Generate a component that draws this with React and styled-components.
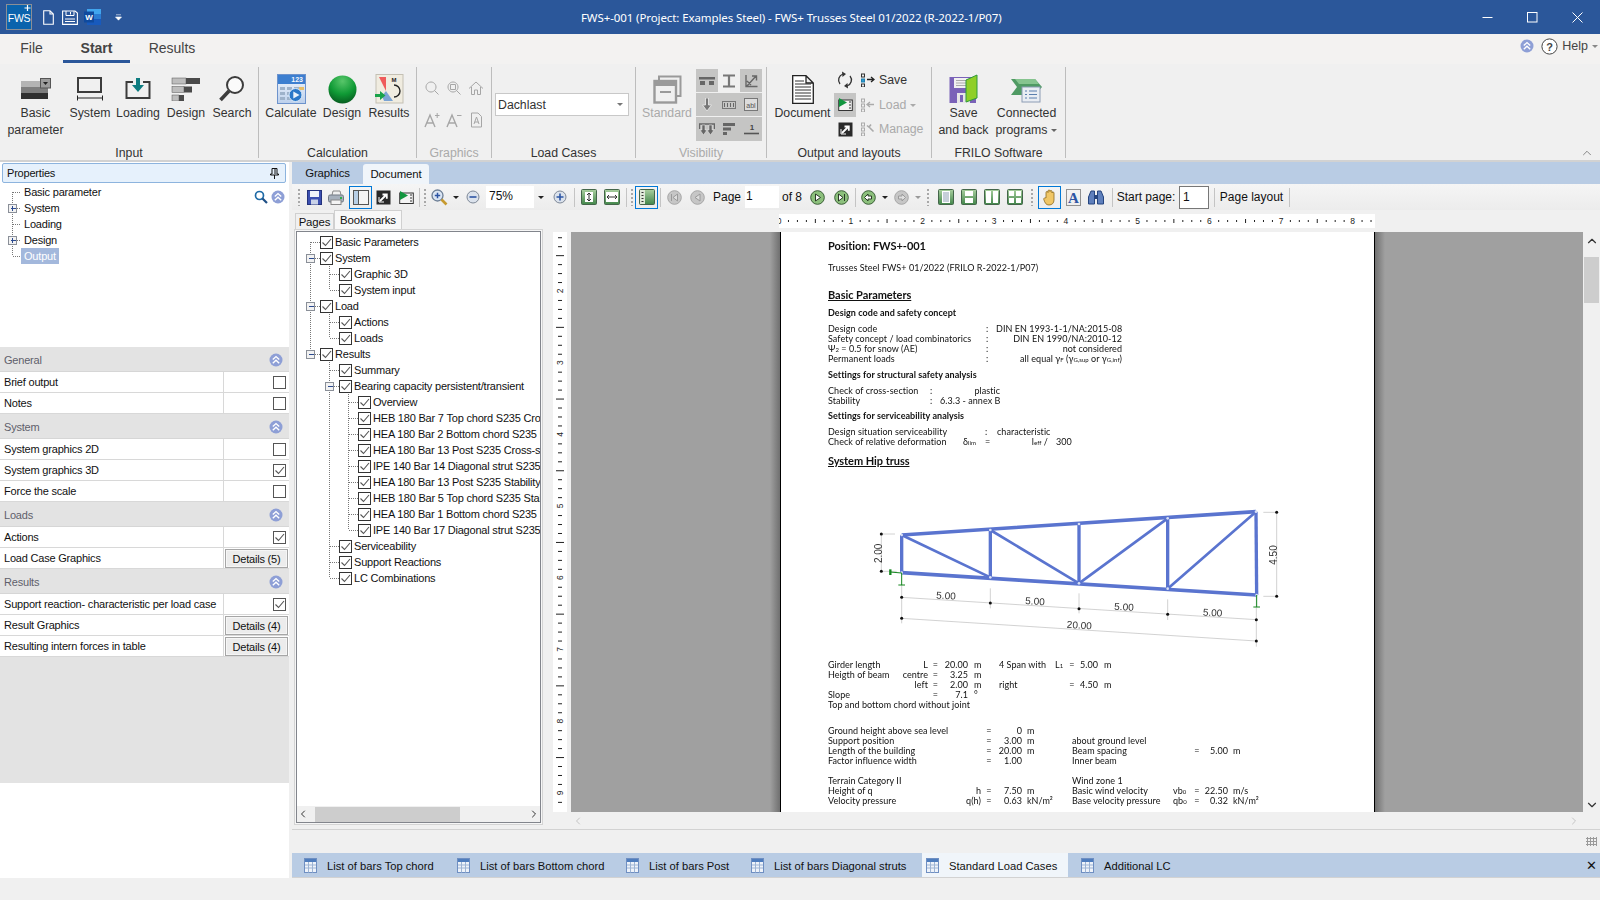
import React from 'react';
import styled, { createGlobalStyle } from 'styled-components';
import { ChevronLeft, ChevronRight, ChevronUp, ChevronDown } from 'lucide-react';

const UI_FONT = '"Liberation Sans", Arial, sans-serif';

const GlobalStyle = createGlobalStyle`
html, body {
    margin: 0;
    padding: 0;
    background: #f0f0f0;
}
* {
    box-sizing: border-box;
}
`

const Wrapper = styled.div`
width: 1600px;
height: 900px;
display: flex;
flex-direction: column;
overflow: hidden;
font-family: ${UI_FONT};
font-size: 11px;
letter-spacing: -0.2px;
color: #111;
background: #f0f0f0;
`

/* title bar */
const TitleBar = styled.div`
height: 34px;
flex: none;
display: grid;
grid-template-columns: 581px 1fr auto;
align-items: center;
background: #2b579a;
color: #fff;
`

const Quick = styled.div`
display: flex;
align-items: center;
padding-left: 6px;
`

const QuickItem = styled.span`
display: flex;
margin-left: ${p => p.$ml || 0}px;
`

const TitleText = styled.div`
font-family: "Noto Sans", sans-serif;
font-size: 11.5px;
letter-spacing: -0.1px;
white-space: nowrap;
`

const WinButtons = styled.div`
display: flex;
align-items: center;
`

const WinButton = styled.div`
width: 45px;
height: 34px;
display: flex;
align-items: center;
justify-content: center;
`

/* ribbon */
const RibbonTabs = styled.div`
height: 30px;
flex: none;
display: flex;
background: #f3f2f1;
font-size: 14px;
letter-spacing: 0;
color: #444;
`

const RibbonTab = styled.div`
width: ${p => p.$w}px;
height: 29px;
line-height: 28px;
text-align: center;
font-weight: ${p => p.$active ? 700 : 400};
border-bottom: 3px solid ${p => p.$active ? '#2b579a' : 'transparent'};
`

const HelpBox = styled.div`
margin-left: auto;
display: flex;
align-items: center;
height: 24px;
padding-right: 2px;
gap: 4px;
font-size: 12.5px;
color: #444;
`

const RibbonBody = styled.div`
height: 98px;
flex: none;
display: flex;
position: relative;
padding-top: 3px;
background: #f0f0f0;
border-bottom: 2px solid #d2d2d2;
font-size: 12.3px;
letter-spacing: 0;
color: #333;
`

const Group = styled.div`
width: ${p => p.$w}px;
height: 91px;
flex: none;
display: flex;
flex-direction: column;
border-right: 1px solid #bdbdbd;
`

const GroupBody = styled.div`
height: 79px;
flex: none;
display: flex;
padding-left: ${p => p.$pad || 0}px;
`

const GroupLabel = styled.div`
height: 15px;
flex: none;
line-height: 15px;
text-align: center;
color: ${p => p.$dim ? '#aaa' : '#333'};
`

const BigButton = styled.div`
width: ${p => p.$w}px;
flex: none;
display: flex;
flex-direction: column;
align-items: center;
padding-top: 6px;
text-align: center;
line-height: 16.5px;
white-space: nowrap;
color: ${p => p.$dim ? '#aaa' : 'inherit'};
`

const BigIcon = styled.div`
height: 32px;
display: flex;
align-items: center;
justify-content: center;
`

const SmallGrid = styled.div`
height: 79px;
flex: none;
display: grid;
grid-template-columns: repeat(3, 22px);
grid-auto-rows: 32px;
padding: 5px 0 0 4px;
place-items: center;
`

const RibbonSelect = styled.div`
width: 134px;
height: 23px;
margin: 26px 0 0 3px;
display: flex;
align-items: center;
justify-content: space-between;
padding: 0 5px 0 2px;
background: #fff;
border: 1px solid #c8c8c8;
`

const Caret = styled.span`
display: inline-block;
border-left: 3px solid transparent;
border-right: 3px solid transparent;
border-top: 3px solid ${p => p.$color || '#666'};
margin-left: ${p => p.$ml || 0}px;
vertical-align: middle;
`

const VisGrid = styled.div`
width: 66px;
height: 72px;
margin: 2px 0 0 0;
display: grid;
grid-template-columns: repeat(3, 22px);
grid-template-rows: repeat(3, 24px);
place-items: center;
background: #c5c5c4;
`

const VisCell = styled.div`
width: 100%;
height: 100%;
display: flex;
align-items: center;
justify-content: center;
background: ${p => p.$light ? '#f0f0f0' : 'transparent'};
border-bottom: ${p => p.$line ? '1px solid #f0f0f0' : '0'};
`

const OutColumn = styled.div`
width: 22px;
margin-top: 1px;
display: flex;
flex-direction: column;
`

const OutCell = styled.div`
height: 24.5px;
display: flex;
align-items: center;
justify-content: center;
background: ${p => p.$on ? '#c5c5c4' : 'transparent'};
`

const OutList = styled.div`
margin: 1px 0 0 5px;
display: flex;
flex-direction: column;
`

const OutRow = styled.div`
height: 24.5px;
display: flex;
align-items: center;
gap: 4px;
color: ${p => p.$dim ? '#aaa' : '#333'};
`

const Collapse = styled.div`
position: absolute;
right: 6px;
bottom: 0;
color: #666;
display: flex;
`

/* main area */
const Main = styled.div`
flex: 1;
min-height: 0;
display: flex;
`

const LeftPanel = styled.div`
width: 289px;
flex: none;
display: flex;
flex-direction: column;
background: #fff;
`

const PropsHead = styled.div`
height: 20px;
margin: 1px 3px 0 2px;
flex: none;
display: flex;
align-items: center;
justify-content: space-between;
padding: 0 6px 0 4px;
background: #e6f1fc;
border: 1px solid #8db4de;
border-radius: 2px;
`

const PropsTree = styled.div`
height: 164px;
flex: none;
position: relative;
padding-top: 1px;
`

const TreeTools = styled.div`
position: absolute;
right: 4px;
top: 7px;
display: flex;
align-items: center;
gap: 3px;
`

const TreeRow = styled.div`
height: 16px;
display: flex;
align-items: center;
white-space: nowrap;
`

const TreeText = styled.span`
height: 16px;
line-height: 17px;
padding: 0 3px 0 ${p => p.$pad ?? 1}px;
margin-left: ${p => p.$ml || 0}px;
background: ${p => p.$sel ? '#a3b8dc' : 'transparent'};
color: ${p => p.$sel ? '#fff' : '#111'};
`

const GroupHead = styled.div`
height: 25px;
flex: none;
display: flex;
align-items: center;
justify-content: space-between;
padding: 1px 6px 0 4px;
background: #e3e3e3;
color: #5f5f6b;
border-bottom: 1px solid #d6d6d6;
`

const PropRow = styled.div`
height: 21px;
flex: none;
display: grid;
grid-template-columns: 224px 1fr;
align-items: center;
background: #fff;
border-bottom: 1px solid #d8d8d8;
`

const PropLabel = styled.div`
height: 100%;
line-height: 20px;
padding-left: 4px;
border-right: 1px solid #d8d8d8;
white-space: nowrap;
`

const PropValue = styled.div`
display: flex;
justify-content: flex-end;
padding-right: 3px;
`

const CheckBox = styled.span`
width: 13px;
height: 13px;
flex: none;
display: inline-flex;
align-items: center;
justify-content: center;
background: #fff;
border: 1px solid ${p => p.$dark ? '#333' : '#555'};
`

const DetailsButton = styled.div`
width: 63px;
height: 19px;
line-height: 18px;
text-align: center;
background: #ececec;
border: 1px solid #a6a6a6;
box-shadow: inset 0 0 0 1px #f6f6f6;
margin-right: -2px;
`

const PropsFill = styled.div`
height: 126px;
flex: none;
background: #e3e3e3;
`

const DocArea = styled.div`
width: 1308px;
margin-left: 3px;
flex: none;
display: flex;
flex-direction: column;
`

const DocTabs = styled.div`
height: 22px;
flex: none;
display: flex;
align-items: flex-end;
background: #b9cce4;
`

const DocTab = styled.div`
width: ${p => p.$w}px;
height: ${p => p.$active ? 20 : 22}px;
line-height: ${p => p.$active ? 21 : 22}px;
text-align: center;
font-size: 11.4px;
letter-spacing: -0.12px;
background: ${p => p.$active ? '#f0f5fa' : 'transparent'};
border-radius: 3px 3px 0 0;
`

const ToolBar = styled.div`
height: 26px;
flex: none;
display: flex;
align-items: center;
padding-left: 3px;
background: linear-gradient(#f5f5f5, #ececec);
font-size: 12px;
letter-spacing: 0;
`

const Tool = styled.div`
width: ${p => p.$w}px;
height: 23px;
flex: none;
display: flex;
align-items: center;
justify-content: center;
white-space: nowrap;
margin-left: ${p => p.$ml || 0}px;
border: ${p => p.$on ? '1px solid #0078d7' : '0'};
`

const ToolSep = styled.div`
width: 1px;
height: 19px;
flex: none;
margin: 0 ${p => p.$m ?? 3}px;
background: #c4c4c4;
`

const Grip = styled.div`
width: 2px;
height: 17px;
flex: none;
margin: 0 ${p => p.$m ?? 3}px;
background-image: linear-gradient(#a8a8a8 50%, transparent 50%);
background-size: 2px 4px;
`

const ToolInput = styled.div`
width: ${p => p.$w}px;
height: ${p => p.$h || 22}px;
flex: none;
margin-left: ${p => p.$ml || 0}px;
line-height: ${p => (p.$h || 22) - 2}px;
padding-left: ${p => p.$pl ?? 3}px;
background: #fff;
border: ${p => p.$box ? '1px solid #777' : '0'};
`

const DocBody = styled.div`
height: 620px;
flex: none;
display: flex;
border-bottom: 1px solid #d2d2d2;
`

const SidePane = styled.div`
width: 251px;
flex: none;
display: flex;
flex-direction: column;
`

const PaneTabs = styled.div`
height: 21px;
flex: none;
display: flex;
align-items: flex-end;
padding-left: 3px;
font-size: 11.4px;
letter-spacing: -0.12px;
`

const PaneTab = styled.div`
width: ${p => p.$w}px;
height: ${p => p.$active ? 21 : 18}px;
line-height: ${p => p.$active ? 18 : 17}px;
text-align: center;
background: ${p => p.$active ? '#f8f8f8' : '#f0f0f0'};
border: 1px solid #d0d0d0;
border-bottom: 0;
`

const TreeBox = styled.div`
height: 592px;
flex: none;
margin: 0 2px 0 4px;
display: flex;
flex-direction: column;
background: #fff;
border: 1px solid #82858c;
box-shadow: 0 0 0 1px #f6f6f6, 0 0 0 2px #d4d4d4;
`

const BookTree = styled.div`
flex: 1;
overflow: hidden;
padding-top: 2px;
`

const BookRow = styled.div`
height: 16px;
display: flex;
align-items: center;
white-space: nowrap;
font-size: 11px;
`

const HScroll = styled.div`
height: 16px;
flex: none;
display: flex;
align-items: center;
justify-content: space-between;
background: #f0f0f0;
color: #333;
`

const HThumb = styled.div`
width: 145px;
height: 15px;
margin-left: 6px;
background: #cdcdcd;
`

const HFill = styled.div`
flex: 1;
`

const Viewer = styled.div`
flex: 1;
min-width: 0;
display: flex;
flex-direction: column;
`

const TopRuler = styled.div`
height: 22px;
flex: none;
padding: 4px 0 0 236px;
`

const ViewRow = styled.div`
flex: 1;
min-height: 0;
display: flex;
`

const SideRuler = styled.div`
width: 14px;
margin: 0 4px 0 10px;
flex: none;
background: #fff;
`

const Canvas = styled.div`
width: 1012px;
flex: none;
display: flex;
justify-content: center;
overflow: hidden;
background: #a0a0a0;
`

const Shadow = styled.div`
width: 209px;
flex: none;
background: linear-gradient(${p => p.$dir}deg, #a0a0a0 calc(100% - 10px), #707070 100%);
`

const Page = styled.div`
width: 595px;
flex: none;
padding: 7px 0 0 47.5px;
overflow: hidden;
background: #fff;
border-left: 1px solid #000;
border-right: 1px solid #000;
font-family: Lato, sans-serif;
font-size: 9px;
letter-spacing: 0.05px;
color: #111;
filter: blur(0.25px);
`

const DocHead = styled.div`
height: 14px;
line-height: 14px;
margin-top: ${p => p.$mt || 0}px;
font-size: 11px;
font-weight: 700;
letter-spacing: -0.05px;
text-decoration: ${p => p.$line ? 'underline' : 'none'};
white-space: nowrap;
color: #111;
`

const DocLine = styled.div`
height: 10px;
line-height: 10px;
margin-top: ${p => p.$mt || 0}px;
display: grid;
grid-template-columns: ${p => p.$cols || '1fr'};
font-weight: ${p => p.$bold ? 700 : 400};
white-space: nowrap;
`

const DocCell = styled.div`
text-align: ${p => p.$a || 'left'};
padding-left: ${p => p.$pad || 0}px;
min-width: 0;
`

const Tiny = styled.span`
font-size: 6px;
`

const TrussBox = styled.div`
height: 180px;
margin: 12px 0 0 -18px;
`

const VScroll = styled.div`
width: 17px;
margin-left: auto;
flex: none;
display: flex;
flex-direction: column;
align-items: center;
padding-top: 2px;
color: #333;
`

const VThumb = styled.div`
width: 15px;
height: 46px;
margin-top: 9px;
background: #cdcdcd;
`

const PageScroll = styled.div`
height: 17px;
flex: none;
display: flex;
align-items: center;
justify-content: space-between;
padding: 0 20px 0 29px;
color: #c4c4c4;
`

const DockGap = styled.div`
flex: 1;
display: flex;
align-items: center;
justify-content: flex-end;
padding-right: 3px;
`

const Dots = styled.div`
width: 11px;
height: 9px;
background-image: radial-gradient(#9a9a9a 1px, transparent 1.2px);
background-size: 3px 3px;
`

const BottomTabs = styled.div`
height: 25px;
flex: none;
display: flex;
align-items: center;
padding-left: 12px;
background: #b9cce4;
border-bottom: 1px solid #d2d2d2;
font-size: 11.2px;
letter-spacing: 0;
`

const BottomTab = styled.div`
width: ${p => p.$w}px;
height: 24px;
flex: none;
display: flex;
align-items: center;
gap: 10px;
padding: 1px 0 0 ${p => p.$pl || 0}px;
background: ${p => p.$active ? '#f0f5fa' : 'transparent'};
white-space: nowrap;
`

const BottomClose = styled.div`
margin-left: auto;
padding-right: 3px;
font-size: 13px;
`

const StatusBar = styled.div`
height: 22px;
flex: none;
background: #f0f0f0;
`

/* icons */
const Check = () => (
    <svg width="11" height="11" viewBox="0 0 11 11"><path d="M1.5 5.5 L4.5 8.5 L10 2" fill="none" stroke="#555" strokeWidth="1.1" /></svg>
)

const CollapseDot = ({ size = 14 }) => (
    <svg width={size} height={size} viewBox="0 0 14 14">
        <circle cx="7" cy="7" r="6.5" fill="#8e9fd6" />
        <path d="M3.8 6.6 L7 3.6 L10.2 6.6 M3.8 10.2 L7 7.2 L10.2 10.2" fill="none" stroke="#fff" strokeWidth="1.4" />
    </svg>
)

const LogoIcon = () => (
    <svg width="26" height="26" viewBox="0 0 26 26">
        <rect x="0.5" y="0.5" width="25" height="25" fill="#0a63ad" stroke="#8b8f96" />
        <text x="13" y="17.5" textAnchor="middle" fontFamily={UI_FONT} fontSize="10.5" letterSpacing="-0.3" fill="#fff">FWS</text>
        <path d="M18.5 4 H24.5 M21.5 1 V7" stroke="#fff" strokeWidth="1.2" />
    </svg>
)

const NewDocIcon = () => (
    <svg width="11" height="15" viewBox="0 0 11 15"><path d="M0.7 0.7 H7 L10.3 4 V14.3 H0.7 Z M7 0.7 V4 H10.3" fill="none" stroke="#fff" strokeWidth="1.1" /></svg>
)

const QuickSaveIcon = () => (
    <svg width="16" height="15" viewBox="0 0 16 15">
        <path d="M0.6 1 H13 L15.4 3 V14.4 H0.6 Z" fill="none" stroke="#fff" strokeWidth="1.1" />
        <path d="M4 1 V5.5 H12 V1 M8.5 2 V4.5 M3 9 H13 M3 11.5 H13" fill="none" stroke="#fff" />
    </svg>
)

const WordIcon = () => (
    <svg width="17" height="16" viewBox="0 0 17 16">
        <rect x="3" y="0" width="14" height="5" fill="#41a5ee" />
        <rect x="3" y="5" width="14" height="5" fill="#2b7cd3" />
        <rect x="3" y="10" width="14" height="6" fill="#185abd" />
        <rect x="0" y="2.5" width="10" height="11" fill="#0f4a9e" />
        <text x="5" y="11" textAnchor="middle" fontFamily={UI_FONT} fontWeight="700" fontSize="8" fill="#fff">W</text>
    </svg>
)

const QuickMenuIcon = () => (
    <svg width="7" height="7" viewBox="0 0 7 7"><path d="M1 0.8 H6 M0.5 3 H6.5 L3.5 6.2 Z" fill="#fff" stroke="#fff" strokeWidth="0.6" /></svg>
)

const BasicIcon = () => (
    <svg width="30" height="22" viewBox="0 0 30 22">
        <rect x="0" y="3" width="27" height="6" fill="#b4b4b4" />
        <rect x="0" y="9" width="27" height="6" fill="#7e7e7e" />
        <rect x="0" y="15" width="27" height="6" fill="#303030" />
        <rect x="19.5" y="0.5" width="10" height="9.5" fill="#9c9c9c" stroke="#555" />
        <path d="M22 4 H27 L24.5 7 Z" fill="#222" />
    </svg>
)

const SystemIcon = () => (
    <svg width="28" height="26" viewBox="0 0 28 26">
        <rect x="2" y="2" width="23" height="14" fill="none" stroke="#3c3c3c" strokeWidth="2" />
        <path d="M1 22 H27" stroke="#222" />
        <path d="M1.5 19.5 V24.5 M26.5 19.5 V24.5" stroke="#222" />
    </svg>
)

const LoadingIcon = () => (
    <svg width="26" height="22" viewBox="0 0 26 22">
        <path d="M8 4 H1.5 V20 H24.5 V4 H18" fill="none" stroke="#3c3c3c" strokeWidth="2" />
        <path d="M11 0 H15 V7 H19 L13 14 L7 7 H11 Z" fill="#0e7c80" />
    </svg>
)

const DesignBarsIcon = () => (
    <svg width="30" height="24" viewBox="0 0 30 24">
        <rect x="1" y="1" width="14" height="6" fill="#bdbdbd" stroke="#555" strokeWidth="0.5" />
        <rect x="15" y="1" width="14" height="6" fill="#4a4a4a" />
        <rect x="1" y="9.5" width="12" height="6" fill="#bdbdbd" stroke="#555" strokeWidth="0.5" />
        <rect x="13" y="9.5" width="8" height="6" fill="#4a4a4a" />
        <rect x="1" y="18" width="7" height="6" fill="#bdbdbd" stroke="#555" strokeWidth="0.5" />
        <rect x="8" y="18" width="5" height="6" fill="#4a4a4a" />
    </svg>
)

const SearchIcon = () => (
    <svg width="28" height="28" viewBox="0 0 28 28">
        <circle cx="17" cy="10" r="8" fill="#fafafa" stroke="#3c3c3c" strokeWidth="2" />
        <path d="M11 16 L2.5 25" stroke="#3c3c3c" strokeWidth="3.6" />
    </svg>
)

const CalcIcon = () => (
    <svg width="29" height="30" viewBox="0 0 29 30">
        <defs>
            <linearGradient id="calcBg" x1="0" y1="0" x2="0" y2="1"><stop offset="0" stopColor="#f4f7fc" /><stop offset="1" stopColor="#bcd0ec" /></linearGradient>
        </defs>
        <rect x="0.5" y="0.5" width="28" height="29" fill="url(#calcBg)" stroke="#6d93cc" />
        <rect x="1" y="1" width="27" height="9" fill="#3d7fd0" />
        <text x="26" y="8" textAnchor="end" fontFamily={UI_FONT} fontSize="7" fontWeight="700" fill="#f4f7fc">123</text>
        <g fill="#9eb2ca">
            <rect x="3" y="13" width="5" height="3" /><rect x="10" y="13" width="5" height="3" /><rect x="17" y="13" width="5" height="3" />
            <rect x="3" y="18" width="5" height="3" /><rect x="10" y="18" width="5" height="3" />
            <rect x="3" y="23" width="5" height="3" /><rect x="10" y="23" width="5" height="3" />
        </g>
        <rect x="22" y="13" width="5" height="3" fill="#e8bf68" />
        <circle cx="18.5" cy="21" r="6.5" fill="#2a78c8" stroke="#d8e8f8" />
        <path d="M16.3 17.5 L22.5 21 L16.3 24.5 Z" fill="#eaf3fb" />
    </svg>
)

const BallIcon = () => (
    <svg width="29" height="29" viewBox="0 0 29 29">
        <defs>
            <radialGradient id="ball" cx="0.5" cy="0.2" r="0.85"><stop offset="0" stopColor="#58c66a" /><stop offset="0.55" stopColor="#0f9a35" /><stop offset="1" stopColor="#06541d" /></radialGradient>
        </defs>
        <circle cx="14.5" cy="14.5" r="14" fill="url(#ball)" />
    </svg>
)

const ResultsIcon = () => (
    <svg width="29" height="30" viewBox="0 0 29 30">
        <rect x="1" y="0.5" width="27" height="28.5" fill="#f0ece0" stroke="#c4c0b4" />
        <path d="M4 3 H11 L11 17 Z" fill="#ef5b5b" />
        <path d="M11 17 L18 27 H9 L7 22 Z" fill="#7ba4d4" />
        <path d="M19 11 A6 6 0 0 1 19 23" fill="none" stroke="#222" strokeWidth="1.4" />
        <text x="19" y="8" textAnchor="middle" fontFamily={UI_FONT} fontSize="6" fontWeight="700" fill="#222">M</text>
        <path d="M0 20 H5 V17 L10.5 21.5 L5 26 V23 H0 Z" fill="#19a34a" />
    </svg>
)

const GreyGlyph = ({ d, size = 16, w = 1 }) => (
    <svg width={size} height={size} viewBox="0 0 16 16"><path d={d} fill="none" stroke="#a6a6a6" strokeWidth={w} /></svg>
)

const FontGlyph = ({ sign }) => (
    <svg width="16" height="16" viewBox="0 0 16 16">
        <path d="M1 15 L6 3 L11 15 M3 11 H9" fill="none" stroke="#a6a6a6" strokeWidth="1.4" />
        <path d={sign} fill="none" stroke="#a6a6a6" />
    </svg>
)

const StandardIcon = () => (
    <svg width="29" height="29" viewBox="0 0 29 29">
        <path d="M6 6 V1.5 H27.5 V21 H23" fill="none" stroke="#9a9a9a" strokeWidth="2" />
        <rect x="1.5" y="6" width="21.5" height="21.5" fill="none" stroke="#9a9a9a" strokeWidth="2.4" />
        <rect x="1.5" y="6" width="21.5" height="5" fill="#9a9a9a" />
        <path d="M7 17 H18" stroke="#9a9a9a" strokeWidth="2" />
    </svg>
)

const DocumentIcon = () => (
    <svg width="22" height="29" viewBox="0 0 22 29">
        <path d="M0.7 0.7 H14 L21.3 8 V28.3 H0.7 Z M14 0.7 V8 H21.3" fill="#fff" stroke="#222" strokeWidth="1.3" />
        <path d="M3 6 H12 M3 9 H19 M3 12 H19 M3 15 H19 M3 18 H19 M3 21 H19 M3 24 H19" stroke="#333" />
    </svg>
)

const RefreshIcon = () => (
    <svg width="16" height="18" viewBox="0 0 16 18">
        <path d="M3 13 A6.3 6.3 0 0 1 6 3 M13 5 A6.3 6.3 0 0 1 10 15" fill="none" stroke="#333" strokeWidth="1.3" />
        <path d="M5 0.5 L9 3 L5.5 6 Z M11 17.5 L7 15 L10.5 12 Z" fill="#333" />
    </svg>
)

const ListIcon = ({ colors, mark, dim }) => (
    <svg width="14" height="14" viewBox="0 0 14 14">
        <rect x="0.5" y="1" width="3" height="3" fill="none" stroke={colors[0]} />
        <rect x="0.5" y="6" width="3" height="3" fill={dim ? 'none' : '#2e9ad0'} stroke={colors[1]} />
        <rect x="0.5" y="11" width="3" height="3" fill="none" stroke={colors[0]} />
        {mark}
    </svg>
)

const MovieIcon = ({ size = 15 }) => (
    <svg width={size} height={size} viewBox="0 0 15 15">
        <rect x="0.7" y="3" width="13.6" height="10.5" fill="#f4f4f4" stroke="#333" />
        <path d="M1 1 V10 L9 5.5 Z" fill="#12963f" />
        <path d="M11 5 H13 M11 8 H13 M11 11 H13" stroke="#333" />
    </svg>
)

const ExpandIcon = ({ size = 15 }) => (
    <svg width={size} height={size} viewBox="0 0 15 15">
        <rect x="0.5" y="0.5" width="14" height="14" fill="#2a2a2a" />
        <path d="M4 11 L10 5 M6.5 4.5 H10.8 V8.7" fill="none" stroke="#fff" strokeWidth="1.8" />
        <path d="M3 7 V12 H8" fill="none" stroke="#fff" />
    </svg>
)

const FloppyGreenIcon = () => (
    <svg width="29" height="30" viewBox="0 0 29 30">
        <path d="M0.5 3 H27 V29 H0.5 Z" fill="#7a62b8" />
        <rect x="5" y="4" width="16" height="10" fill="#f0f0f0" />
        <path d="M7 6.5 H19 M7 9 H19 M7 11.5 H19" stroke="#aaa" />
        <rect x="8" y="19" width="13" height="10" fill="#e6e6e6" />
        <rect x="11" y="21" width="3" height="7" fill="#7a62b8" />
        <path d="M17 6 L28 1 V24 L17 28 Z" fill="#8fcf28" stroke="#2f9a3a" />
    </svg>
)

const ConnectedIcon = () => (
    <svg width="32" height="27" viewBox="0 0 32 27">
        <path d="M0 3 H24 L31 11 L24 19 H0 L6 11 Z" fill="#4f9a63" />
        <path d="M4 3 H24 L28 8 H8 Z" fill="#86c48f" />
        <rect x="11" y="11" width="18" height="15" fill="#e9edf3" stroke="#8c9cb4" />
        <path d="M14 15 H16 M18 15 H26 M14 18.5 H16 M18 18.5 H26 M14 22 H16 M18 22 H26" stroke="#5b7fae" />
    </svg>
)

const PinIcon = () => (
    <svg width="9" height="11" viewBox="0 0 9 11"><path d="M2 0.5 H7 V6 H8.5 V7 H0.5 V6 H2 Z M4.5 7 V11" fill="none" stroke="#111" /><path d="M5 1 V6" stroke="#111" /></svg>
)

const LensIcon = () => (
    <svg width="14" height="14" viewBox="0 0 14 14"><circle cx="5.5" cy="5.5" r="4" fill="#fff" stroke="#1e6aa6" strokeWidth="1.7" /><path d="M8.5 8.5 L13 13" stroke="#1e4f86" strokeWidth="2.2" /></svg>
)

const FloppyTool = () => (
    <svg width="15" height="15" viewBox="0 0 15 15">
        <rect x="0.5" y="0.5" width="14" height="14" fill="#3b4fb0" stroke="#24327c" />
        <rect x="3" y="1" width="9" height="6" fill="#f0f3fa" />
        <rect x="4" y="9.5" width="7" height="5" fill="#c9d2e8" />
    </svg>
)

const PrintTool = () => (
    <svg width="16" height="15" viewBox="0 0 16 15">
        <path d="M4 5 L5 1 H12 L13 5" fill="#f0f0f0" stroke="#888" />
        <rect x="0.5" y="5" width="15" height="7" rx="1.5" fill="#a6b0bc" stroke="#727a84" />
        <rect x="3" y="10" width="10" height="4.5" fill="#f4f4f4" stroke="#888" />
        <rect x="12" y="7" width="2" height="2" fill="#2fae4e" />
    </svg>
)

const PaneTool = () => (
    <svg width="16" height="15" viewBox="0 0 16 15">
        <rect x="0.5" y="0.5" width="15" height="14" fill="#f5f5f5" stroke="#555" />
        <rect x="1" y="1" width="4.5" height="13" fill="#b8cfe6" />
        <path d="M5.5 1 V14" stroke="#555" />
    </svg>
)

const ZoomTool = () => (
    <svg width="17" height="17" viewBox="0 0 17 17">
        <circle cx="6.5" cy="6.5" r="5.5" fill="#dbe6f4" stroke="#6d7f96" strokeWidth="1.3" />
        <path d="M3.8 6.5 H9.2 M6.5 3.8 V9.2" stroke="#2d55a4" strokeWidth="1.5" />
        <path d="M10.5 10.5 L15.5 15.5" stroke="#c69a30" strokeWidth="2.6" />
    </svg>
)

const RoundTool = ({ plus }) => (
    <svg width="14" height="14" viewBox="0 0 14 14">
        <circle cx="7" cy="7" r="6" fill="#dbe2ec" stroke="#7d8796" />
        <path d={plus ? 'M3.5 7 H10.5 M7 3.5 V10.5' : 'M3.5 7 H10.5'} stroke="#2d55a4" strokeWidth="1.6" />
    </svg>
)

const GreenFrame = ({ children }) => (
    <svg width="16" height="16" viewBox="0 0 16 16">
        <defs>
            <linearGradient id="frameGreen" x1="0" y1="0" x2="0" y2="1"><stop offset="0" stopColor="#a9cf9f" /><stop offset="1" stopColor="#42864a" /></linearGradient>
        </defs>
        <rect x="0.5" y="0.5" width="15" height="15" rx="1" fill="url(#frameGreen)" stroke="#44664a" />
        {children}
    </svg>
)

const NavRound = ({ d, on = true }) => (
    <svg width="15" height="15" viewBox="0 0 15 15">
        <circle cx="7.5" cy="7.5" r="6.8" fill={on ? '#8cc07c' : '#c6c6c6'} stroke={on ? '#3a5f36' : '#a6a6a6'} />
        <path d={d} fill={on ? '#fff' : '#dedede'} stroke={on ? '#2a3a28' : '#9a9a9a'} />
    </svg>
)

const HandTool = () => (
    <svg width="14" height="17" viewBox="0 0 14 17">
        <path d="M3 9 V3.5 a1 1 0 0 1 2 0 V2 a1 1 0 0 1 2 0 V2.5 a1 1 0 0 1 2 0 V4 a1 1 0 0 1 2 0 V11 C11 14 9 16 6 16 C3 16 2 14 0.8 10.5 C0.4 9 2.2 8.4 3 9 Z" fill="#f0c665" stroke="#8a6a22" strokeWidth="0.8" />
    </svg>
)

const TextSelectTool = () => (
    <svg width="15" height="17" viewBox="0 0 15 17">
        <rect x="0.5" y="0.5" width="14" height="16" fill="none" stroke="#333" strokeDasharray="1 1" />
        <text x="7.5" y="14" textAnchor="middle" fontFamily='"Liberation Serif", serif' fontWeight="700" fontSize="15" fill="#2d55a4">A</text>
    </svg>
)

const BinocularTool = () => (
    <svg width="16" height="15" viewBox="0 0 16 15">
        <path d="M3 1 H6.5 V14 H0.5 V7 Z M13 1 H9.5 V14 H15.5 V7 Z" fill="#5e7fbc" stroke="#24447e" />
        <rect x="6.5" y="5" width="3" height="4" fill="#24447e" />
    </svg>
)

const SheetIcon = () => (
    <svg width="13" height="15" viewBox="0 0 13 15" style={{ flex: 'none' }}>
        <rect x="0.5" y="0.5" width="12" height="14" fill="#eef3fa" stroke="#6f8fc2" />
        <rect x="1" y="1" width="11" height="3" fill="#4f7dbd" />
        <path d="M1 7 H12 M1 10 H12 M4.5 4 V14.5 M8.5 4 V14.5" stroke="#9db4d4" />
    </svg>
)

const Guides = ({ level, base, step, width, pass = [], own, expand }) => {
    const x = base + step * level;
    const top = own === 'first' ? 8 : 0;
    const bottom = own === 'end' ? 8 : 16;
    return (
        <svg width={width} height="16" viewBox={`0 0 ${width} 16`} style={{ flex: 'none' }}>
            <g stroke="#777" strokeDasharray="1 1" shapeRendering="crispEdges">
                {pass.map(l => <path key={l} d={`M${base + step * l} 0 V16`} />)}
                <path d={`M${x} ${top} V${bottom}`} />
                <path d={`M${x} 8 H${width}`} />
            </g>
            {expand && (
                <g shapeRendering="crispEdges">
                    <rect x={x - 4} y="4" width="8" height="8" fill="#f2f2f2" stroke="#8a8f98" />
                    <path d={expand === '+' ? `M${x - 2} 8 H${x + 3} M${x} 6 V11` : `M${x - 2} 8 H${x + 3}`} stroke="#2b4a90" />
                </g>
            )}
        </svg>
    );
};

const Truss = () => {
    const top = [[275, 165], [541, 150], [807, 132], [1073, 115], [1338, 95]];
    const bottom = [[275, 278], [541, 292], [807, 310], [1073, 326], [1340, 345]];
    const dimDots = [[214, 162], [214, 274], [1400, 97], [1400, 349], [275, 352], [541, 369], [807, 386], [1073, 403], [1339, 419], [275, 415], [1339, 483]];
    const spans = [[408, 347], [675, 364], [942, 381], [1208, 398]];
    return (
        <svg width="500" height="180" viewBox="0 0 1500 540">
            <g stroke="#bbb" strokeWidth="2" fill="none">
                <path d="M214 162 H255 M214 274 H260 M214 162 V274 M1360 97 H1400 M1360 349 H1400 M1400 97 V349" />
                <path d="M275 352 L1339 419 M275 415 L1339 483" />
                <path d="M275 312 V430 M541 325 V385 M807 340 V400 M1073 358 V420 M1339 350 V500" />
            </g>
            <g stroke="#5a74cf" fill="none">
                <path d="M275 165 L1338 95 M275 278 L1340 345" strokeWidth="11" />
                {top.map((p, i) => <path key={i} d={`M${p[0]} ${p[1]} L${bottom[i][0]} ${bottom[i][1]}`} strokeWidth="10" />)}
                <path d="M275 165 L541 292 M541 150 L807 310 M807 310 L1073 115 M1073 326 L1338 95" strokeWidth="8" />
            </g>
            <g fill="#d8e0f6">
                {top.concat(bottom).map((p, i) => <circle key={i} cx={p[0]} cy={p[1]} r="4" />)}
            </g>
            <g stroke="#15861f" strokeWidth="3" fill="none">
                <path d="M240 276 L275 279 V315 M265 315 H285 M1340 345 V381 M1330 381 H1350" />
                <path d="M241 268 V285" strokeWidth="7" />
            </g>
            <g fill="#111">
                {dimDots.map((p, i) => <circle key={i} cx={p[0]} cy={p[1]} r="4.5" />)}
            </g>
            <g fontFamily={UI_FONT} fontSize="30" fill="#333" textAnchor="middle">
                {spans.map((p, i) => <text key={i} x={p[0]} y={p[1] + 10} transform={`rotate(3.6 ${p[0]} ${p[1]})`}>5.00</text>)}
                <text x="808" y="446" transform="rotate(3.6 808 436)">20.00</text>
                <text x="205" y="230" transform="rotate(-90 205 220)">2.00</text>
                <text x="1390" y="235" transform="rotate(-90 1390 225)">4.50</text>
            </g>
        </svg>
    );
};

const RULER_STEP = 71.7;

const HorizontalRuler = () => {
    const ticks = [];
    for (let i = 0; i < 67; i++) ticks.push(i * (RULER_STEP / 8));
    return (
        <svg width="596" height="14" viewBox="0 0 596 14" style={{ display: 'block' }}>
            <rect width="596" height="14" fill="#fff" />
            {ticks.map((x, i) => i % 8 === 0
                ? <text key={i} x={x} y="10" textAnchor="middle" fontFamily={UI_FONT} fontSize="8.5" fill="#222">{i / 8}</text>
                : <rect key={i} x={x} y={i % 4 === 0 ? 5 : 6} width="1" height={i % 4 === 0 ? 4 : 2} fill="#222" />)}
        </svg>
    );
};

const VerticalRuler = () => {
    const ticks = [];
    for (let i = 0; i < 66; i++) ticks.push(-12.7 + i * (RULER_STEP / 8));
    return (
        <svg width="14" height="580" viewBox="0 0 14 580" style={{ display: 'block' }}>
            {ticks.map((y, i) => {
                const n = i % 8 === 0;
                if (n) return <text key={i} x="7" y={y + 3} textAnchor="middle" fontFamily={UI_FONT} fontSize="8.5" fill="#222" transform={`rotate(-90 7 ${y})`}>{i / 8 + 1}</text>;
                return <rect key={i} x={i % 4 === 0 ? 3 : 5} y={y} width={i % 4 === 0 ? 8 : 4} height="1" fill="#222" />;
            })}
        </svg>
    );
};

const propsTree = [
    { t: 'Basic parameter', own: 'first' },
    { t: 'System', own: 'mid', expand: '+' },
    { t: 'Loading', own: 'mid' },
    { t: 'Design', own: 'mid', expand: '+' },
    { t: 'Output', own: 'end', sel: true },
];

const bookmarks = [
    { t: 'Basic Parameters', l: 0, own: 'first' },
    { t: 'System', l: 0, own: 'mid', expand: '-' },
    { t: 'Graphic 3D', l: 1, pass: [0], own: 'mid' },
    { t: 'System input', l: 1, pass: [0], own: 'end' },
    { t: 'Load', l: 0, own: 'mid', expand: '-' },
    { t: 'Actions', l: 1, pass: [0], own: 'mid' },
    { t: 'Loads', l: 1, pass: [0], own: 'end' },
    { t: 'Results', l: 0, own: 'end', expand: '-' },
    { t: 'Summary', l: 1, own: 'mid' },
    { t: 'Bearing capacity persistent/transient', l: 1, own: 'mid', expand: '-' },
    { t: 'Overview', l: 2, pass: [1], own: 'mid' },
    { t: 'HEB 180 Bar 7 Top chord S235 Cross-section', l: 2, pass: [1], own: 'mid' },
    { t: 'HEA 180 Bar 2 Bottom chord S235 Cross-section', l: 2, pass: [1], own: 'mid' },
    { t: 'HEA 180 Bar 13 Post S235 Cross-section', l: 2, pass: [1], own: 'mid' },
    { t: 'IPE 140 Bar 14 Diagonal strut S235 Cross-section', l: 2, pass: [1], own: 'mid' },
    { t: 'HEA 180 Bar 13 Post S235 Stability', l: 2, pass: [1], own: 'mid' },
    { t: 'HEB 180 Bar 5 Top chord S235 Stability', l: 2, pass: [1], own: 'mid' },
    { t: 'HEA 180 Bar 1 Bottom chord S235 Stability', l: 2, pass: [1], own: 'mid' },
    { t: 'IPE 140 Bar 17 Diagonal strut S235 Stability', l: 2, pass: [1], own: 'end' },
    { t: 'Serviceability', l: 1, own: 'mid' },
    { t: 'Support Reactions', l: 1, own: 'mid' },
    { t: 'LC Combinations', l: 1, own: 'end' },
];

const propGroups = [
    { name: 'General', rows: [{ t: 'Brief output' }, { t: 'Notes' }] },
    { name: 'System', rows: [{ t: 'System graphics 2D' }, { t: 'System graphics 3D', on: true }, { t: 'Force the scale' }] },
    { name: 'Loads', rows: [{ t: 'Actions', on: true }, { t: 'Load Case Graphics', details: 5 }] },
    { name: 'Results', rows: [{ t: 'Support reaction- characteristic per load case', on: true }, { t: 'Result Graphics', details: 4 }, { t: 'Resulting intern forces in table', details: 4 }] },
];

const bottomTabs = [
    { t: 'List of bars Top chord', w: 153 },
    { t: 'List of bars Bottom chord', w: 169 },
    { t: 'List of bars Post', w: 125 },
    { t: 'List of bars Diagonal struts', w: 171 },
    { t: 'Standard Load Cases', w: 146, pl: 4, active: true },
    { t: 'Additional LC', w: 100, pl: 13 },
];

const SPLIT_A = '158px 10px 126px';
const SPLIT_B = '102px 10px 60px';
const SPLIT_C = '135px 22px 12px 51px 8px 40px';
const SPLIT_D = '60px 40px 15px 25px 31px 56px 12px 10px 21px 30px';
const SPLIT_E = '122px 31px 16px 25px 50px 101px 17px 14px 24px 30px';

const Row5 = ({ cells, mt }) => (
    <DocLine $cols={SPLIT_D} $mt={mt}>
        {cells.map((c, i) => (
            <DocCell key={i} $a={i === 1 || i === 3 || i === 8 ? 'right' : i === 2 || i === 7 ? 'center' : 'left'} $pad={i === 4 || i === 9 ? 6 : 0}>{c}</DocCell>
        ))}
    </DocLine>
);

const Row6 = ({ cells, mt }) => (
    <DocLine $cols={SPLIT_E} $mt={mt}>
        {cells.map((c, i) => (
            <DocCell key={i} $a={i === 1 || i === 3 || i === 8 ? 'right' : i === 2 || i === 7 ? 'center' : 'left'} $pad={i === 4 || i === 9 ? 5 : 0}>{c}</DocCell>
        ))}
    </DocLine>
);

function App() {
    return (
        <Wrapper>
            <GlobalStyle />
            <TitleBar>
                <Quick>
                    <LogoIcon />
                    <QuickItem $ml={11}><NewDocIcon /></QuickItem>
                    <QuickItem $ml={8}><QuickSaveIcon /></QuickItem>
                    <QuickItem $ml={6}><WordIcon /></QuickItem>
                    <QuickItem $ml={14}><QuickMenuIcon /></QuickItem>
                </Quick>
                <TitleText>FWS+-001 (Project: Examples Steel) - FWS+ Trusses Steel 01/2022 (R-2022-1/P07)</TitleText>
                <WinButtons>
                    <WinButton><svg width="11" height="11" viewBox="0 0 11 11"><path d="M0.5 5.5 H10.5" stroke="#fff" /></svg></WinButton>
                    <WinButton><svg width="11" height="11" viewBox="0 0 11 11"><rect x="0.5" y="0.5" width="9.5" height="9.5" fill="none" stroke="#fff" /></svg></WinButton>
                    <WinButton><svg width="11" height="11" viewBox="0 0 11 11"><path d="M0.5 0.5 L10.5 10.5 M10.5 0.5 L0.5 10.5" stroke="#fff" /></svg></WinButton>
                </WinButtons>
            </TitleBar>

            <RibbonTabs>
                <RibbonTab $w={63}>File</RibbonTab>
                <RibbonTab $w={67} $active>Start</RibbonTab>
                <RibbonTab $w={84}>Results</RibbonTab>
                <HelpBox>
                    <CollapseDot />
                    <svg width="17" height="17" viewBox="0 0 17 17" style={{ marginLeft: 3 }}>
                        <circle cx="8.5" cy="8.5" r="7.6" fill="#fff" stroke="#444" />
                        <text x="8.5" y="12.5" textAnchor="middle" fontFamily={UI_FONT} fontWeight="700" fontSize="11" fill="#444">?</text>
                    </svg>
                    <span>Help</span>
                    <Caret $color="#888" />
                </HelpBox>
            </RibbonTabs>

            <RibbonBody>
                <Group $w={259}>
                    <GroupBody $pad={3}>
                        <BigButton $w={65}><BigIcon><BasicIcon /></BigIcon>Basic<br />parameter</BigButton>
                        <BigButton $w={44}><BigIcon><SystemIcon /></BigIcon>System</BigButton>
                        <BigButton $w={52}><BigIcon><LoadingIcon /></BigIcon>Loading</BigButton>
                        <BigButton $w={44}><BigIcon><DesignBarsIcon /></BigIcon>Design</BigButton>
                        <BigButton $w={48}><BigIcon><SearchIcon /></BigIcon>Search</BigButton>
                    </GroupBody>
                    <GroupLabel>Input</GroupLabel>
                </Group>
                <Group $w={158}>
                    <GroupBody $pad={3}>
                        <BigButton $w={58}><BigIcon><CalcIcon /></BigIcon>Calculate</BigButton>
                        <BigButton $w={44}><BigIcon><BallIcon /></BigIcon>Design</BigButton>
                        <BigButton $w={50}><BigIcon><ResultsIcon /></BigIcon>Results</BigButton>
                    </GroupBody>
                    <GroupLabel>Calculation</GroupLabel>
                </Group>
                <Group $w={75}>
                    <SmallGrid>
                        <GreyGlyph d="M7 2 a5 5 0 1 0 0.01 0 Z M10.5 10.5 L14.5 14.5" />
                        <GreyGlyph d="M7 2 a5 5 0 1 0 0.01 0 Z M4.5 4.5 H9.5 V9.5 H4.5 Z M10.5 10.5 L14.5 14.5" />
                        <GreyGlyph d="M1 8.5 L8 2 L15 8.5 M3.5 7 V14.5 H6.5 V10 H9.5 V14.5 H12.5 V7" />
                        <FontGlyph sign="M11 3.5 H15.5 M13.2 1 V6" />
                        <FontGlyph sign="M11 3.5 H15.5" />
                        <GreyGlyph d="M3.5 1 H10 L13.5 4.5 V15 H3.5 Z M6 12 L8.5 5 L11 12 M6.8 10 H10.2" />
                    </SmallGrid>
                    <GroupLabel $dim>Graphics</GroupLabel>
                </Group>
                <Group $w={144}>
                    <GroupBody>
                        <RibbonSelect>Dachlast<Caret $color="#777" /></RibbonSelect>
                    </GroupBody>
                    <GroupLabel>Load Cases</GroupLabel>
                </Group>
                <Group $w={131}>
                    <GroupBody $pad={2}>
                        <BigButton $w={58} $dim><BigIcon><StandardIcon /></BigIcon>Standard</BigButton>
                        <VisGrid>
                            <VisCell $line>
                                <svg width="16" height="8" viewBox="0 0 16 8"><path d="M0 0 H16 V2.5 H0 Z M1 4 H6 V8 H1 Z M10 4 H15 V8 H10 Z" fill="#666" /></svg>
                            </VisCell>
                            <VisCell $light $line>
                                <svg width="14" height="14" viewBox="0 0 14 14"><path d="M1 1.5 H13 M7 1.5 V12.5 M1 12.5 H13" stroke="#777" strokeWidth="2.2" /></svg>
                            </VisCell>
                            <VisCell $line>
                                <svg width="14" height="14" viewBox="0 0 14 14"><path d="M2 1 V12.5 H13.5 M3 12 L12 2 M8 2 H12.5 V6.5 M3 7 L7 11" fill="none" stroke="#666" strokeWidth="1.4" /></svg>
                            </VisCell>
                            <VisCell $line>
                                <svg width="12" height="14" viewBox="0 0 12 14"><path d="M4.5 0 H7.5 V7 H10.5 L6 13 L1.5 7 H4.5 Z" fill="#777" stroke="#eee" strokeWidth="0.8" /></svg>
                            </VisCell>
                            <VisCell $line>
                                <svg width="14" height="8" viewBox="0 0 14 8"><rect x="0.5" y="0.5" width="13" height="7" fill="none" stroke="#777" /><path d="M2.5 2 V6 M5.5 2 V6 M8.5 2 V6 M11.5 2 V6" stroke="#666" /></svg>
                            </VisCell>
                            <VisCell $line>
                                <svg width="14" height="13" viewBox="0 0 14 13"><rect x="0.5" y="0.5" width="13" height="12" fill="#ddd" stroke="#777" /><text x="7" y="9.5" textAnchor="middle" fontFamily={UI_FONT} fontSize="7" fill="#555">abl</text></svg>
                            </VisCell>
                            <VisCell>
                                <svg width="16" height="12" viewBox="0 0 16 12"><path d="M0.5 6 V1 H15.5 V6 M2 1 H14" fill="none" stroke="#666" strokeWidth="1.4" /><path d="M3 2 H6 V7 H8 L4.5 12 L1 7 H3 Z M10 2 H13 V7 H15 L11.5 12 L8 7 H10 Z" fill="#666" stroke="#eee" strokeWidth="0.5" /></svg>
                            </VisCell>
                            <VisCell>
                                <svg width="12" height="12" viewBox="0 0 12 12"><path d="M0 0 H12 V3 H0 Z M0 4.5 H8 V7.5 H0 Z M0 9 H4 V12 H0 Z" fill="#666" /></svg>
                            </VisCell>
                            <VisCell>
                                <svg width="15" height="12" viewBox="0 0 15 12"><text x="8" y="7" textAnchor="middle" fontFamily={UI_FONT} fontWeight="700" fontSize="8" fill="#444">1</text><path d="M0 10.5 H15" stroke="#555" strokeWidth="1.6" /></svg>
                            </VisCell>
                        </VisGrid>
                    </GroupBody>
                    <GroupLabel $dim>Visibility</GroupLabel>
                </Group>
                <Group $w={165}>
                    <GroupBody $pad={4}>
                        <BigButton $w={63}><BigIcon><DocumentIcon /></BigIcon>Document</BigButton>
                        <OutColumn>
                            <OutCell><RefreshIcon /></OutCell>
                            <OutCell $on><MovieIcon /></OutCell>
                            <OutCell><ExpandIcon /></OutCell>
                        </OutColumn>
                        <OutList>
                            <OutRow>
                                <ListIcon colors={['#333', '#1f7fae']} mark={<path d="M6 6.5 H12 M10 4 L13 6.5 L10 9" fill="none" stroke="#222" strokeWidth="1.3" />} />
                                Save
                            </OutRow>
                            <OutRow $dim>
                                <ListIcon dim colors={['#aaa', '#aaa']} mark={<path d="M7 6.5 H13 M9 4 L6 6.5 L9 9" fill="none" stroke="#aaa" strokeWidth="1.3" />} />
                                <span>Load<Caret $color="#aaa" $ml={4} /></span>
                            </OutRow>
                            <OutRow $dim>
                                <ListIcon dim colors={['#aaa', '#aaa']} mark={<path d="M6 3.5 L9 6 L12.5 9.5 M10 2.5 L8 5" fill="none" stroke="#aaa" strokeWidth="1.6" />} />
                                Manage
                            </OutRow>
                        </OutList>
                    </GroupBody>
                    <GroupLabel>Output and layouts</GroupLabel>
                </Group>
                <Group $w={134}>
                    <GroupBody>
                        <BigButton $w={63}><BigIcon><FloppyGreenIcon /></BigIcon>Save<br />and back</BigButton>
                        <BigButton $w={63}><BigIcon><ConnectedIcon /></BigIcon>Connected<br /><span>programs<Caret $color="#666" $ml={4} /></span></BigButton>
                    </GroupBody>
                    <GroupLabel>FRILO Software</GroupLabel>
                </Group>
                <Collapse><ChevronUp size={14} strokeWidth={1.3} /></Collapse>
            </RibbonBody>

            <Main>
                <LeftPanel>
                    <PropsHead>Properties<PinIcon /></PropsHead>
                    <PropsTree>
                        <TreeTools><LensIcon /><CollapseDot /></TreeTools>
                        {propsTree.map(r => (
                            <TreeRow key={r.t}>
                                <Guides level={0} base={12.5} step={0} width={21} own={r.own} expand={r.expand} />
                                <TreeText $sel={r.sel} $pad={3}>{r.t}</TreeText>
                            </TreeRow>
                        ))}
                    </PropsTree>
                    {propGroups.map(g => (
                        <React.Fragment key={g.name}>
                            <GroupHead>{g.name}<CollapseDot /></GroupHead>
                            {g.rows.map(r => (
                                <PropRow key={r.t}>
                                    <PropLabel>{r.t}</PropLabel>
                                    <PropValue>
                                        {r.details
                                            ? <DetailsButton>Details ({r.details})</DetailsButton>
                                            : <CheckBox>{r.on && <Check />}</CheckBox>}
                                    </PropValue>
                                </PropRow>
                            ))}
                        </React.Fragment>
                    ))}
                    <PropsFill />
                </LeftPanel>

                <DocArea>
                    <DocTabs>
                        <DocTab $w={71}>Graphics</DocTab>
                        <DocTab $w={66} $active>Document</DocTab>
                    </DocTabs>
                    <ToolBar>
                        <Grip />
                        <Tool $w={22}><FloppyTool /></Tool>
                        <Tool $w={22}><PrintTool /></Tool>
                        <Tool $w={23} $ml={2} $on><PaneTool /></Tool>
                        <Tool $w={23}><ExpandIcon /></Tool>
                        <Tool $w={22}><MovieIcon /></Tool>
                        <ToolSep $m={2} />
                        <Grip $m={2} />
                        <Tool $w={22}><ZoomTool /></Tool>
                        <Tool $w={12}><Caret $color="#222" /></Tool>
                        <Tool $w={22}><RoundTool /></Tool>
                        <ToolInput $w={48} $ml={2}>75%</ToolInput>
                        <Tool $w={14}><Caret $color="#222" /></Tool>
                        <Tool $w={23}><RoundTool plus /></Tool>
                        <ToolSep $m={3} />
                        <Tool $w={22}><GreenFrame><rect x="4" y="3" width="8" height="10" fill="#fff" /><path d="M8 4 V12 M6 6 L8 4 L10 6 M6 10 L8 12 L10 10" fill="none" stroke="#333" /></GreenFrame></Tool>
                        <Tool $w={24}><GreenFrame><rect x="2" y="3" width="12" height="10" fill="#fff" /><path d="M3 8 H13 M5 6 L3 8 L5 10 M11 6 L13 8 L11 10" fill="none" stroke="#333" /></GreenFrame></Tool>
                        <ToolSep $m={2} />
                        <Grip $m={2} />
                        <Tool $w={23} $on><GreenFrame><rect x="1" y="1" width="5" height="14" fill="#dfe9d8" /><path d="M2.5 3.5 H4.5 M2.5 6.5 H4.5 M2.5 9.5 H4.5 M2.5 12.5 H4.5" stroke="#333" /></GreenFrame></Tool>
                        <ToolSep $m={2} />
                        <Tool $w={23}><NavRound on={false} d="M10.5 4 V11 L6 7.5 Z M4.5 4 V11" /></Tool>
                        <Tool $w={23}><NavRound on={false} d="M10 4 V11 L5 7.5 Z" /></Tool>
                        <Tool $w={36}>Page</Tool>
                        <ToolInput $w={34} $pl={1}>1</ToolInput>
                        <Tool $w={26}>of 8</Tool>
                        <Tool $w={24}><NavRound d="M5.5 4 V11 L10.5 7.5 Z" /></Tool>
                        <Tool $w={24}><NavRound d="M4.5 4 V11 L9 7.5 Z M10.5 4 V11" /></Tool>
                        <ToolSep $m={2} />
                        <Tool $w={21}><NavRound d="M10.5 6 H7 V4 L3.5 7.5 L7 11 V9 H10.5 Z" /></Tool>
                        <Tool $w={11}><Caret $color="#222" /></Tool>
                        <Tool $w={22}><NavRound on={false} d="M4.5 6 H8 V4 L11.5 7.5 L8 11 V9 H4.5 Z" /></Tool>
                        <Tool $w={11}><Caret $color="#999" /></Tool>
                        <Grip $m={4} />
                        <Tool $w={23} $ml={1}><GreenFrame><rect x="4" y="2" width="8" height="12" fill="#fff" /><path d="M5 4 H11 M5 6 H11 M5 8 H11 M5 10 H11 M5 12 H11" stroke="#8f9fb4" /></GreenFrame></Tool>
                        <Tool $w={23}><GreenFrame><rect x="4" y="2" width="8" height="5" fill="#fff" /><rect x="4" y="9" width="8" height="5" fill="#fff" /></GreenFrame></Tool>
                        <Tool $w={23}><GreenFrame><rect x="2" y="2" width="5" height="12" fill="#fff" /><rect x="9" y="2" width="5" height="12" fill="#fff" /></GreenFrame></Tool>
                        <Tool $w={23}><GreenFrame><rect x="2" y="2" width="5" height="5" fill="#fff" /><rect x="9" y="2" width="5" height="5" fill="#fff" /><rect x="2" y="9" width="5" height="5" fill="#fff" /><rect x="9" y="9" width="5" height="5" fill="#fff" /></GreenFrame></Tool>
                        <Grip $m={5} />
                        <Tool $w={23} $on><HandTool /></Tool>
                        <Tool $w={23} $ml={1}><TextSelectTool /></Tool>
                        <Tool $w={22}><BinocularTool /></Tool>
                        <ToolSep $m={5} />
                        <Tool $w={56}>Start page:</Tool>
                        <ToolInput $w={30} $h={23} $ml={5} $box>1</ToolInput>
                        <ToolSep $m={5} />
                        <Tool $w={63}>Page layout</Tool>
                        <ToolSep $m={6} />
                    </ToolBar>
                    <DocBody>
                        <SidePane>
                            <PaneTabs>
                                <PaneTab $w={39}>Pages</PaneTab>
                                <PaneTab $w={68} $active>Bookmarks</PaneTab>
                            </PaneTabs>
                            <TreeBox>
                                <BookTree>
                                    {bookmarks.map(r => (
                                        <BookRow key={r.t}>
                                            <Guides level={r.l} base={13.5} step={19} width={23 + 19 * r.l} pass={r.pass} own={r.own} expand={r.expand} />
                                            <CheckBox $dark><Check /></CheckBox>
                                            <TreeText $pad={2}>{r.t}</TreeText>
                                        </BookRow>
                                    ))}
                                </BookTree>
                                <HScroll>
                                    <ChevronLeft size={12} />
                                    <HThumb />
                                    <HFill />
                                    <ChevronRight size={12} />
                                </HScroll>
                            </TreeBox>
                        </SidePane>
                        <Viewer>
                            <TopRuler><HorizontalRuler /></TopRuler>
                            <ViewRow>
                                <SideRuler><VerticalRuler /></SideRuler>
                                <Canvas>
                                    <Shadow $dir={90} />
                                    <Page>
                                        <DocHead>Position: FWS+-001</DocHead>
                                        <DocLine $mt={10}>Trusses Steel FWS+ 01/2022 (FRILO R-2022-1/P07)</DocLine>
                                        <DocHead $mt={15} $line>Basic Parameters</DocHead>
                                        <DocLine $mt={6} $bold>Design code and safety concept</DocLine>
                                        <DocLine $mt={6} $cols={SPLIT_A}><DocCell>Design code</DocCell><DocCell>:</DocCell><DocCell $a="right">DIN EN 1993-1-1/NA:2015-08</DocCell></DocLine>
                                        <DocLine $cols={SPLIT_A}><DocCell>Safety concept / load combinatorics</DocCell><DocCell>:</DocCell><DocCell $a="right">DIN EN 1990/NA:2010-12</DocCell></DocLine>
                                        <DocLine $cols={SPLIT_A}><DocCell>Ψ<Tiny>2</Tiny> = 0.5 for snow (AE)</DocCell><DocCell>:</DocCell><DocCell $a="right">not considered</DocCell></DocLine>
                                        <DocLine $cols={SPLIT_A}><DocCell>Permanent loads</DocCell><DocCell>:</DocCell><DocCell $a="right">all equal γ<Tiny>F</Tiny> (γ<Tiny>G,sup</Tiny> or γ<Tiny>G,inf</Tiny>)</DocCell></DocLine>
                                        <DocLine $mt={6} $bold>Settings for structural safety analysis</DocLine>
                                        <DocLine $mt={6} $cols={SPLIT_B}><DocCell>Check of cross-section</DocCell><DocCell>:</DocCell><DocCell $a="right">plastic</DocCell></DocLine>
                                        <DocLine $cols={SPLIT_B}><DocCell>Stability</DocCell><DocCell>:</DocCell><DocCell $a="right">6.3.3 - annex B</DocCell></DocLine>
                                        <DocLine $mt={5} $bold>Settings for serviceability analysis</DocLine>
                                        <DocLine $mt={6} $cols={SPLIT_C}><DocCell>Design situation serviceability</DocCell><DocCell /><DocCell>:</DocCell><DocCell>characteristic</DocCell></DocLine>
                                        <DocLine $cols={SPLIT_C}><DocCell>Check of relative deformation</DocCell><DocCell>δ<Tiny>lim</Tiny></DocCell><DocCell>=</DocCell><DocCell $a="right">l<Tiny>eff</Tiny> /</DocCell><DocCell /><DocCell>300</DocCell></DocLine>
                                        <DocHead $mt={7} $line>System Hip truss</DocHead>
                                        <TrussBox><Truss /></TrussBox>
                                        <Row5 cells={['Girder length', 'L', '=', '20.00', 'm', '4 Span with', <React.Fragment key="l">L<Tiny>1</Tiny></React.Fragment>, '=', '5.00', 'm']} />
                                        <Row5 cells={['Heigth of beam', 'centre', '=', '3.25', 'm']} />
                                        <Row5 cells={['', 'left', '=', '2.00', 'm', 'right', '', '=', '4.50', 'm']} />
                                        <Row5 cells={['Slope', '', '=', '7.1', '°']} />
                                        <DocLine>Top and bottom chord without joint</DocLine>
                                        <Row6 mt={16} cells={['Ground height above sea level', '', '=', '0', 'm']} />
                                        <Row6 cells={['Support position', '', '=', '3.00', 'm', 'about ground level']} />
                                        <Row6 cells={['Length of the building', '', '=', '20.00', 'm', 'Beam spacing', '', '=', '5.00', 'm']} />
                                        <Row6 cells={['Factor influence width', '', '=', '1.00', '', 'Inner beam']} />
                                        <Row6 mt={10} cells={['Terrain Category II', '', '', '', '', 'Wind zone 1']} />
                                        <Row6 cells={['Height of q', 'h', '=', '7.50', 'm', 'Basic wind velocity', <React.Fragment key="v">vb<Tiny>0</Tiny></React.Fragment>, '=', '22.50', 'm/s']} />
                                        <Row6 cells={['Velocity pressure', 'q(h)', '=', '0.63', 'kN/m²', 'Base velocity pressure', <React.Fragment key="q">qb<Tiny>0</Tiny></React.Fragment>, '=', '0.32', 'kN/m²']} />
                                    </Page>
                                    <Shadow $dir={270} />
                                </Canvas>
                                <VScroll>
                                    <ChevronUp size={14} />
                                    <VThumb />
                                    <HFill />
                                    <ChevronDown size={14} />
                                </VScroll>
                            </ViewRow>
                            <PageScroll>
                                <ChevronLeft size={12} />
                                <ChevronRight size={12} />
                            </PageScroll>
                        </Viewer>
                    </DocBody>
                    <DockGap><Dots /></DockGap>
                    <BottomTabs>
                        {bottomTabs.map(b => (
                            <BottomTab key={b.t} $w={b.w} $pl={b.pl} $active={b.active}>
                                <SheetIcon />
                                <span>{b.t}</span>
                            </BottomTab>
                        ))}
                        <BottomClose>✕</BottomClose>
                    </BottomTabs>
                </DocArea>
            </Main>
            <StatusBar />
        </Wrapper>
    );
}

export default App;
